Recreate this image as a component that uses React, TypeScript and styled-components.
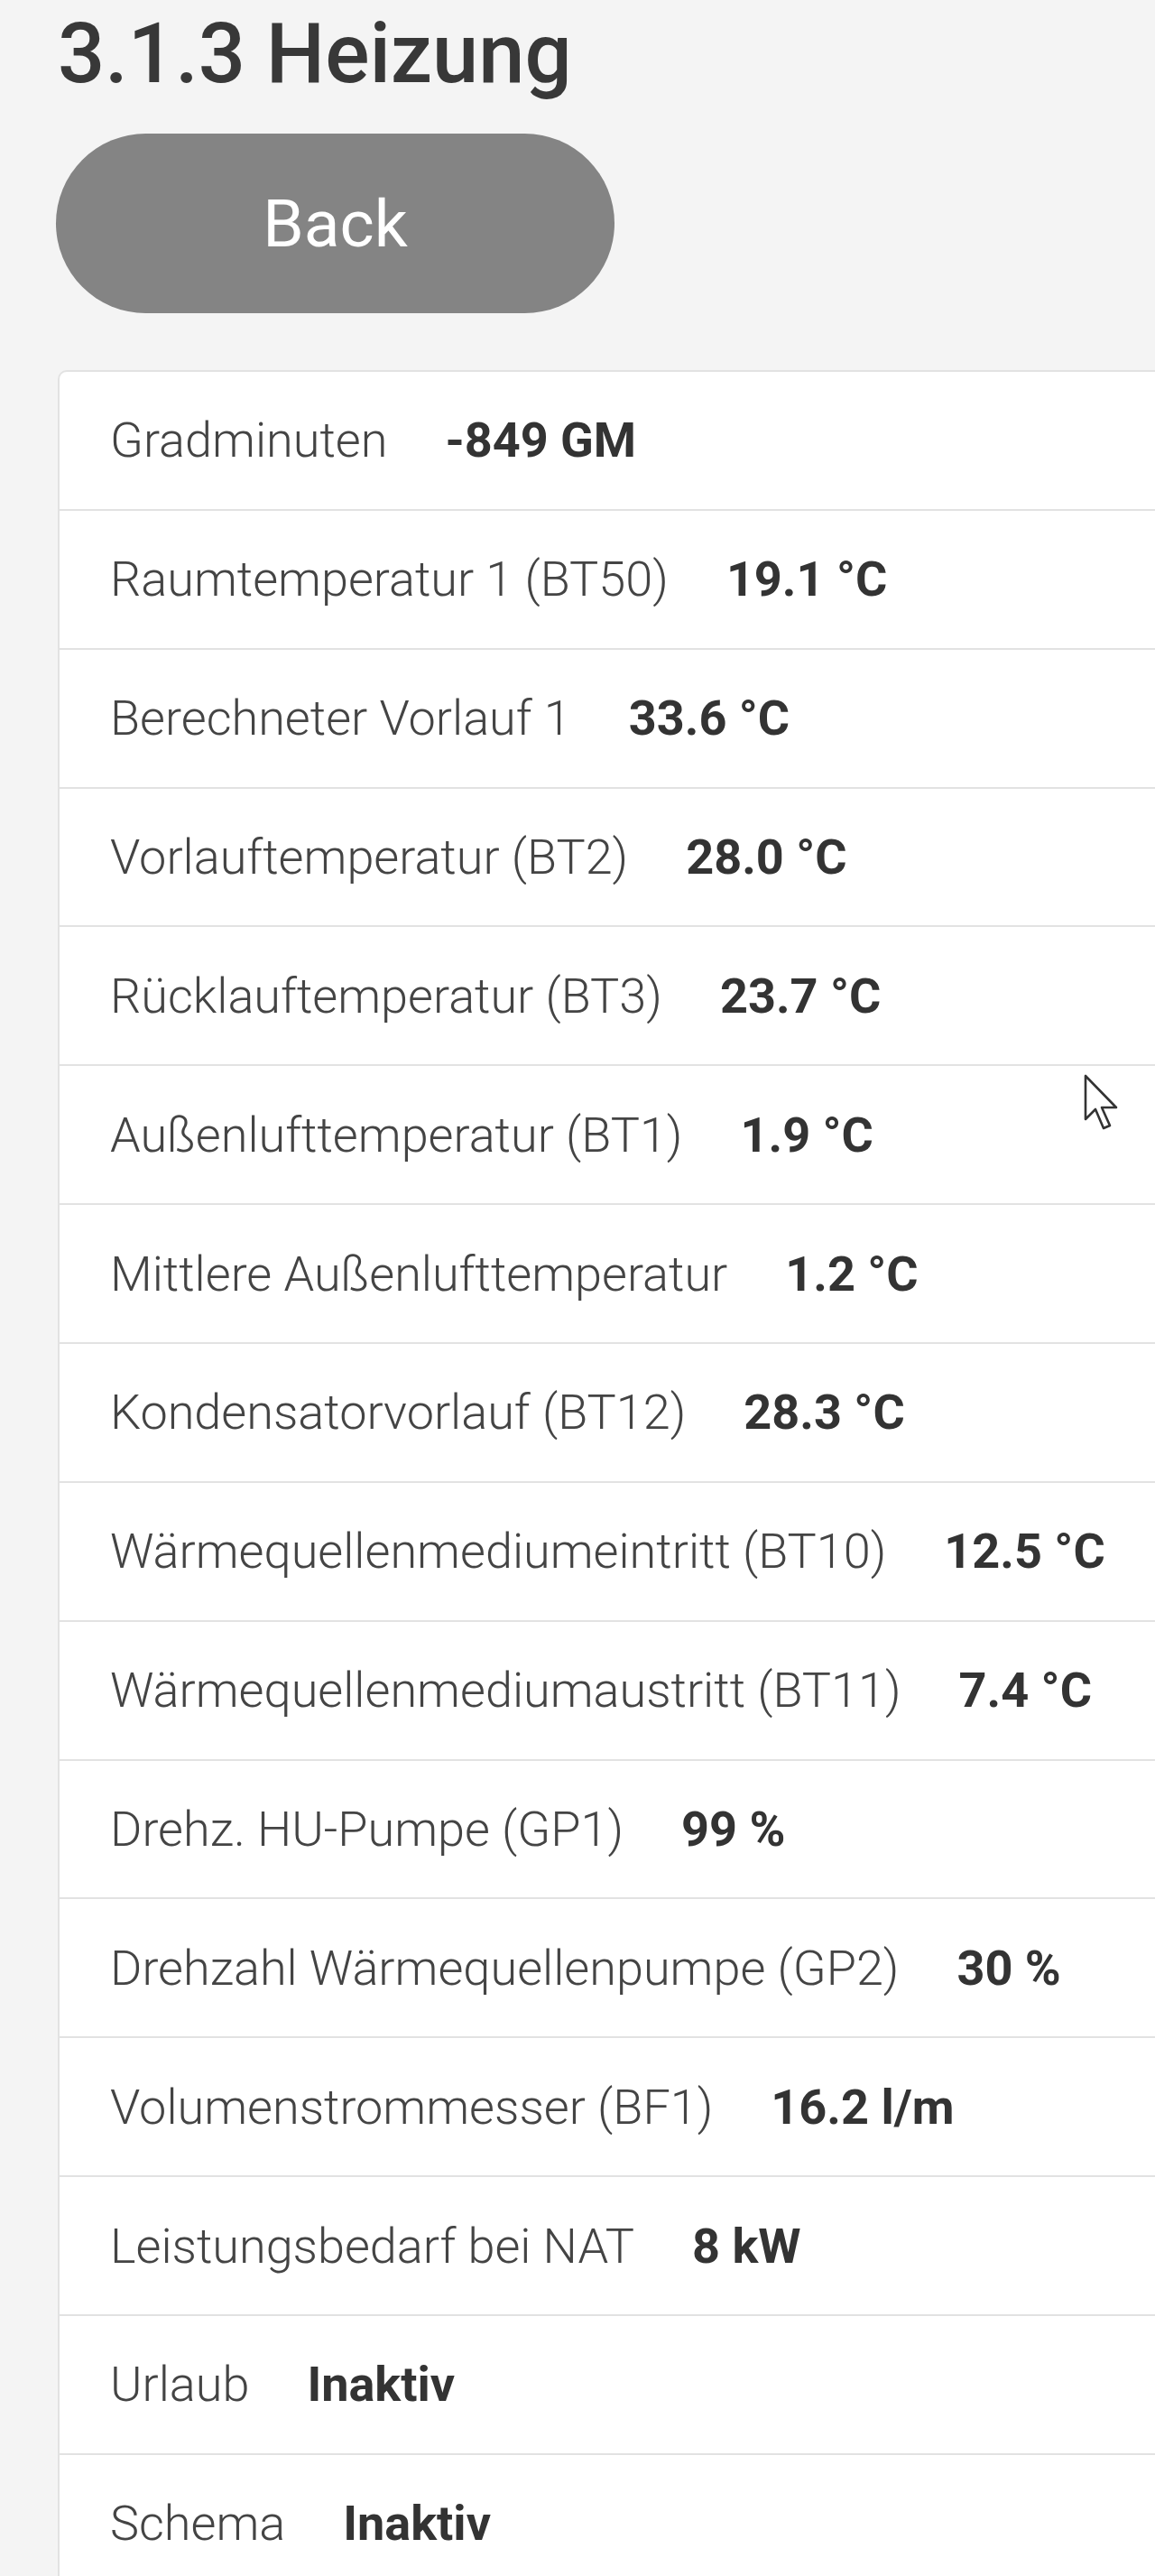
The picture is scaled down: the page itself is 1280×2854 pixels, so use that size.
import React from "react";
import styled, { createGlobalStyle } from "styled-components";

const GlobalStyle = createGlobalStyle`
  html, body {
    margin: 0;
    padding: 0;
    background: #f4f4f4;
    font-family: Roboto, "Liberation Sans", Arial, sans-serif;
    overflow-x: hidden;
  }
`;

const Page = styled.div`
  position: relative;
  padding: 14px 0 0 64px;
  min-height: 2854px;
  box-sizing: border-box;
`;

const Title = styled.h1`
  margin: 0;
  font-size: 92px;
  line-height: 1;
  font-weight: 500;
  color: #383838;
`;

const BackButton = styled.button`
  display: block;
  margin: 42px 0 0 -2px;
  width: 619px;
  height: 199px;
  border: none;
  border-radius: 100px;
  background: #848484;
  color: #fff;
  font-family: inherit;
  font-size: 73px;
  font-weight: 400;
  cursor: pointer;
`;

const Card = styled.div`
  margin-top: 63px;
  background: #fff;
  border: 2px solid #e2e2e2;
  border-right: none;
  border-top-left-radius: 10px;
`;

const Row = styled.div<{ $last?: boolean }>`
  display: flex;
  align-items: center;
  height: 151.86px;
  padding-left: 56px;
  border-bottom: ${(p) => (p.$last ? "none" : "2px solid #e2e2e2")};
`;

const Label = styled.span`
  font-size: 54px;
  font-weight: 300;
  color: #444;
`;

const Value = styled.span`
  margin-left: 64px;
  font-size: 54px;
  font-weight: 700;
  color: #333;
`;

const Pointer = styled.svg`
  position: absolute;
  left: 1201px;
  top: 1190px;
  width: 44px;
  height: 66px;
`;

const rows: [string, string][] = [
  ["Gradminuten", "-849 GM"],
  ["Raumtemperatur 1 (BT50)", "19.1 °C"],
  ["Berechneter Vorlauf 1", "33.6 °C"],
  ["Vorlauftemperatur (BT2)", "28.0 °C"],
  ["Rücklauftemperatur (BT3)", "23.7 °C"],
  ["Außenlufttemperatur (BT1)", "1.9 °C"],
  ["Mittlere Außenlufttemperatur", "1.2 °C"],
  ["Kondensatorvorlauf (BT12)", "28.3 °C"],
  ["Wärmequellenmediumeintritt (BT10)", "12.5 °C"],
  ["Wärmequellenmediumaustritt (BT11)", "7.4 °C"],
  ["Drehz. HU-Pumpe (GP1)", "99 %"],
  ["Drehzahl Wärmequellenpumpe (GP2)", "30 %"],
  ["Volumenstrommesser (BF1)", "16.2 l/m"],
  ["Leistungsbedarf bei NAT", "8 kW"],
  ["Urlaub", "Inaktiv"],
  ["Schema", "Inaktiv"],
];

export default function App() {
  return (
    <Page>
      <GlobalStyle />
      <Title>3.1.3 Heizung</Title>
      <BackButton type="button">Back</BackButton>
      <Card>
        {rows.map(([label, value], i) => (
          <Row key={label} $last={i === rows.length - 1}>
            <Label>{label}</Label>
            <Value>{value}</Value>
          </Row>
        ))}
      </Card>
      <Pointer viewBox="0 0 22 33">
        <path
          d="M1 1 L1 25 L6.5 19.5 L11 30 L14.5 28.5 L10 18.5 L18 18.5 Z"
          fill="#fff"
          stroke="#333"
          strokeWidth="1.3"
          strokeLinejoin="round"
        />
      </Pointer>
    </Page>
  );
}
